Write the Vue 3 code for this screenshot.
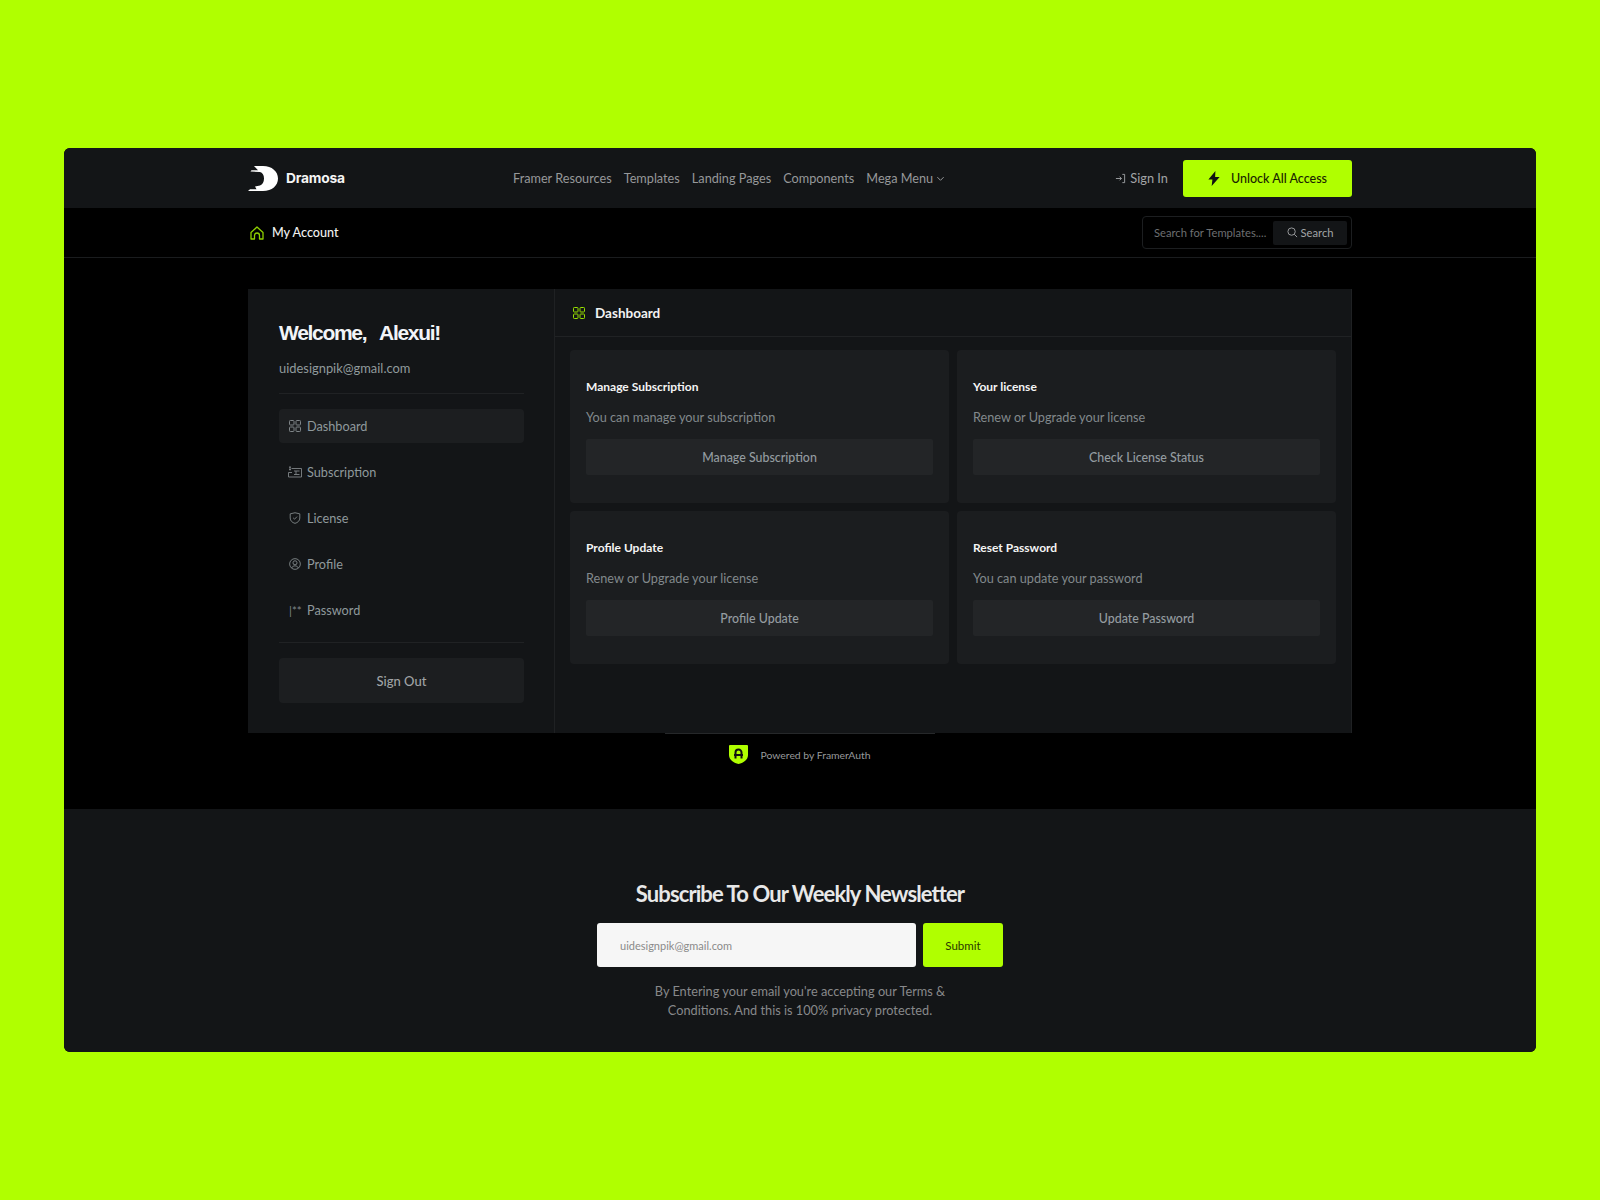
<script setup>
const navLinks = ['Framer Resources', 'Templates', 'Landing Pages', 'Components']

const menuItems = [
  { label: 'Dashboard', icon: 'grid', active: true },
  { label: 'Subscription', icon: 'card' },
  { label: 'License', icon: 'shield' },
  { label: 'Profile', icon: 'user' },
  { label: 'Password', icon: 'pass' }
]

const cards = [
  { title: 'Manage Subscription', text: 'You can manage your subscription', action: 'Manage Subscription' },
  { title: 'Your license', text: 'Renew or Upgrade your license', action: 'Check License Status' },
  { title: 'Profile Update', text: 'Renew or Upgrade your license', action: 'Profile Update' },
  { title: 'Reset Password', text: 'You can update your password', action: 'Update Password' }
]
</script>

<template>
  <div class="window">
    <!-- Top nav -->
    <header class="topbar">
      <div class="container topbar-inner">
        <div class="brand">
          <svg class="logo" viewBox="0 0 30 25" width="30" height="25">
            <path fill="#fff" d="M6 0H15C24 0 30 5.500 30 12.500S24 25 15 25H0L2 23.200H8.500L7 20.500 12 19.500C14.500 18.500 16 16 16 12.500S14.500 6.500 12 6L2.500 5.500 3.500 4.300H10Z" />
          </svg>
          <span>Dramosa</span>
        </div>
        <nav class="nav">
          <a v-for="link in navLinks" :key="link">{{ link }}</a>
          <a class="mega">Mega Menu
            <svg viewBox="0 0 10 10" width="9" height="9" fill="none" stroke="currentColor" stroke-width="1.100"><path d="M1.500 3.500 5 7l3.500-3.500" /></svg>
          </a>
        </nav>
        <div class="top-actions">
          <a class="signin">
            <svg viewBox="0 0 12 12" width="11" height="11" fill="none" stroke="currentColor" stroke-width="1"><path d="M1 6h6M5 4l2 2-2 2M8 1.500h2.500v9H8" /></svg>
            Sign In
          </a>
          <button class="unlock">
            <svg viewBox="0 0 12 16" width="12" height="15"><path fill="#111" d="M7.500 0 0 9h4.300L3.500 16 12 6.500H7.200Z" /></svg>
            Unlock All Access
          </button>
        </div>
      </div>
    </header>

    <!-- Breadcrumb and search -->
    <div class="subbar">
      <div class="container subbar-inner">
        <div class="crumb">
          <svg viewBox="0 0 14 14" width="14" height="14" fill="none" stroke="#8fd000" stroke-width="1.300" stroke-linejoin="round"><path d="M1 6.500 7 1l6 5.500V13H9.500V9.500a2.500 2.500 0 0 0-5 0V13H1Z" /></svg>
          <span>My Account</span>
        </div>
        <div class="searchbox">
          <span class="placeholder">Search for Templates....</span>
          <span class="searchbtn">
            <svg viewBox="0 0 12 12" width="11" height="11" fill="none" stroke="currentColor" stroke-width="1"><circle cx="5" cy="5" r="4" /><path d="m8 8 3 3" /></svg>
            Search
          </span>
        </div>
      </div>
    </div>

    <main class="content">
      <div class="container">
        <div class="panel">
          <aside class="sidebar">
            <h2 class="welcome">Welcome,&nbsp;&nbsp; Alexui!</h2>
            <p class="email">uidesignpik@gmail.com</p>
            <ul class="menu">
              <li v-for="item in menuItems" :key="item.label" :class="{ active: item.active }">
                <svg v-if="item.icon === 'grid'" class="micon" viewBox="0 0 12 12" fill="none" stroke="currentColor" stroke-width="1">
                  <rect x=".5" y=".5" width="4.500" height="4.500" rx=".8" /><rect x="7" y=".5" width="4.500" height="4.500" rx=".8" />
                  <rect x=".5" y="7" width="4.500" height="4.500" rx=".8" /><rect x="7" y="7" width="4.500" height="4.500" rx=".8" />
                </svg>
                <svg v-else-if="item.icon === 'card'" class="micon wide" viewBox="0 0 14 12" fill="none" stroke="currentColor" stroke-width=".9">
                  <path d="M3.500 2.500H13.500V11H.5V6.500H4M6 5h5.500M6 8.500h5.500M8 5v3.500M1 1.200h2M1 3.500h2M2 .5v4" />
                </svg>
                <svg v-else-if="item.icon === 'shield'" class="micon" viewBox="0 0 12 13" fill="none" stroke="currentColor" stroke-width="1">
                  <path d="M.8 2 6 .8 11.200 2v4.500C11.200 9.500 9 11.500 6 12.300 3 11.500.8 9.500.8 6.500Z" /><path d="m4 6.300 1.500 1.500 2.700-2.800" />
                </svg>
                <svg v-else-if="item.icon === 'user'" class="micon" viewBox="0 0 13 13" fill="none" stroke="currentColor" stroke-width="1">
                  <circle cx="6.500" cy="6.500" r="5.800" /><circle cx="6.500" cy="5.200" r="2.200" /><path d="M2.800 10.800c.8-1.500 2.100-2.300 3.700-2.300s2.900.8 3.700 2.300" />
                </svg>
                <span v-else class="micon-pass">|**</span>
                <span>{{ item.label }}</span>
              </li>
            </ul>
            <button class="signout">Sign Out</button>
          </aside>

          <section class="main">
            <div class="main-head">
              <svg viewBox="0 0 12 12" width="12" height="12" fill="none" stroke="#98e000" stroke-width="1">
                <rect x=".5" y=".5" width="4.500" height="4.500" rx=".8" /><rect x="7" y=".5" width="4.500" height="4.500" rx=".8" />
                <rect x=".5" y="7" width="4.500" height="4.500" rx=".8" /><rect x="7" y="7" width="4.500" height="4.500" rx=".8" />
              </svg>
              <span>Dashboard</span>
            </div>
            <div class="cards">
              <div v-for="card in cards" :key="card.title" class="card">
                <h3>{{ card.title }}</h3>
                <p>{{ card.text }}</p>
                <button>{{ card.action }}</button>
              </div>
            </div>
          </section>
        </div>

        <div class="powered">
          <svg viewBox="0 0 19 19" width="19" height="19">
            <path fill="#b0ff00" d="M1 0H18a1 1 0 0 1 1 1V10C19 15 14 18 9.500 19 5 18 0 15 0 10V1a1 1 0 0 1 1-1Z" />
            <path fill="none" stroke="#111" stroke-width="2" d="M6.500 13.500V7.500a3 3 0 0 1 6 0v6M5 10h9" />
          </svg>
          <span>Powered by FramerAuth</span>
        </div>
      </div>
    </main>

    <!-- Newsletter -->
    <footer class="newsletter">
      <h2>Subscribe To Our Weekly Newsletter</h2>
      <form class="subscribe" @submit.prevent>
        <div class="email-field">uidesignpik@gmail.com</div>
        <button>Submit</button>
      </form>
      <p>By Entering your email you're accepting our Terms &amp;<br />Conditions. And this is 100% privacy protected.</p>
    </footer>
  </div>
</template>

<style>
html, body {
  margin: 0;
  background: #b0ff00;
}
</style>

<style scoped>
.window {
  width: 1472px;
  margin: 148px auto 148px;
  background: #000;
  border-radius: 6px;
  overflow: hidden;
  font-family: Lato, "Noto Sans", sans-serif;
  color: #9a9c9e;
}

.container {
  width: 1104px;
  margin: 0 auto;
}

/* Top nav */
.topbar {
  height: 60px;
  background: #131517;
}

.topbar-inner {
  height: 100%;
  display: flex;
  align-items: center;
}

.brand {
  width: 265px;
  display: flex;
  align-items: center;
  gap: 8px;
  font-family: Inter, sans-serif;
  font-weight: 700;
  font-size: 13.800px;
  letter-spacing: -0.2px;
  color: #f4f4f4;
}

.nav {
  display: flex;
  gap: 12px;
  font-size: 12.700px;
  color: #96989a;
}

.mega {
  display: flex;
  align-items: center;
  gap: 3px;
}

.top-actions {
  margin-left: auto;
  display: flex;
  align-items: center;
  gap: 15px;
}

.signin {
  display: flex;
  align-items: center;
  gap: 4px;
  font-size: 12.800px;
  color: #a2a4a6;
}

.unlock {
  width: 169px;
  height: 37px;
  display: flex;
  align-items: center;
  justify-content: center;
  gap: 11px;
  border: 0;
  border-radius: 3px;
  background: #b0ff00;
  color: #1a2400;
  font: 500 12.500px Lato, sans-serif;
}

/* Sub bar */
.subbar {
  height: 49px;
  border-bottom: 1px solid #1a1c1e;
}

.subbar-inner {
  height: 100%;
  display: flex;
  align-items: center;
  justify-content: space-between;
}

.crumb {
  display: flex;
  align-items: center;
  gap: 8px;
  padding-left: 2px;
  font-size: 12.600px;
  font-weight: 500;
  color: #f0f0f0;
}

.searchbox {
  width: 210px;
  height: 33px;
  box-sizing: border-box;
  display: flex;
  align-items: center;
  justify-content: space-between;
  padding: 0 4px 0 11px;
  border: 1px solid #1c1e20;
  border-radius: 4px;
}

.placeholder {
  font-size: 11.200px;
  color: #6d6f71;
}

.searchbtn {
  width: 74px;
  height: 24px;
  display: flex;
  align-items: center;
  justify-content: center;
  gap: 3px;
  border-radius: 2px;
  background: #131517;
  font-size: 11.200px;
  color: #a2a4a6;
}

/* Panel */
.content {
  padding-top: 31px;
  height: 551px;
  box-sizing: border-box;
}

.panel {
  height: 444px;
  display: flex;
  background: #131517;
}

.sidebar {
  width: 307px;
  box-sizing: border-box;
  padding: 0 30px 0 31px;
  border-right: 1px solid #1f2123;
}

.welcome {
  margin: 29px 0 0;
  font: 700 21px/30px "Liberation Sans", sans-serif;
  letter-spacing: -1.300px;
  color: #f2f4f8;
}

.email {
  margin: 11px 0 0;
  padding-bottom: 16px;
  font-size: 12.900px;
  line-height: 18px;
  color: #909a9c;
  border-bottom: 1px solid #202224;
}

.menu {
  list-style: none;
  margin: 15px 0 0;
  padding: 0 0 15px;
  display: flex;
  flex-direction: column;
  gap: 12px;
  border-bottom: 1px solid #202224;
}

.menu li {
  height: 34px;
  display: flex;
  align-items: center;
  gap: 6px;
  padding-left: 10px;
  border-radius: 4px;
  font-size: 12.700px;
  color: #8f999c;
}

.menu li.active {
  background: #1c1e20;
}

.micon {
  width: 12px;
  height: 12px;
  color: #7f8588;
}

.micon.wide {
  width: 14px;
  margin-left: -1px;
  margin-right: -1px;
}

.micon-pass {
  width: 12px;
  font-size: 11.500px;
  white-space: nowrap;
  color: #7f8588;
}

.signout {
  width: 100%;
  height: 45px;
  margin-top: 15px;
  border: 0;
  border-radius: 4px;
  background: #1c1e20;
  color: #a0a4a6;
  font: 500 13px Lato, sans-serif;
}

/* Dashboard */
.main {
  flex: 1;
  border-right: 1px solid #1f2123;
}

.main-head {
  height: 48px;
  box-sizing: border-box;
  display: flex;
  align-items: center;
  gap: 10px;
  padding-left: 18px;
  border-bottom: 1px solid #202224;
  font-size: 13.500px;
  font-weight: 700;
  color: #f2f2f2;
}

.cards {
  display: grid;
  grid-template-columns: 379px 379px;
  gap: 8px;
  padding: 13px 15px 0;
}

.card {
  height: 153px;
  box-sizing: border-box;
  padding: 29px 16px 0;
  border-radius: 4px;
  background: #1b1d1f;
}

.card h3 {
  margin: 0;
  font: 700 12px/16px Lato, sans-serif;
  color: #f4f4f4;
}

.card p {
  margin: 14px 0 0;
  font-size: 12.700px;
  line-height: 16px;
  color: #82898c;
}

.card button {
  width: 100%;
  height: 36px;
  margin-top: 14px;
  border: 0;
  border-radius: 2px;
  background: #232527;
  color: #949ca0;
  font: 500 12.400px Lato, sans-serif;
}

.powered {
  position: relative;
  display: flex;
  align-items: center;
  justify-content: center;
  gap: 12px;
  padding-top: 12px;
  font-size: 10.400px;
  color: #97999b;
}

.powered::before {
  content: '';
  position: absolute;
  top: 0;
  left: 417px;
  width: 270px;
  height: 1px;
  background: #26282a;
}

/* Newsletter */
.newsletter {
  height: 243px;
  background: #131517;
  display: flex;
  flex-direction: column;
  align-items: center;
  text-align: center;
}

.newsletter h2 {
  margin: 70px 0 0;
  font: 700 22px/30px Lato, sans-serif;
  letter-spacing: -0.900px;
  color: #e8e8e8;
}

.subscribe {
  display: flex;
  gap: 7px;
  margin-top: 14px;
}

.email-field {
  width: 319px;
  height: 44px;
  box-sizing: border-box;
  padding: 0 23px;
  display: flex;
  align-items: center;
  border-radius: 3px;
  background: #f6f6f6;
  font-size: 11px;
  color: #8a8a8a;
}

.subscribe button {
  width: 80px;
  height: 44px;
  border: 0;
  border-radius: 3px;
  background: #b0ff00;
  color: #2a3800;
  font: 400 11.500px Lato, sans-serif;
}

.newsletter p {
  margin: 15px 0 0;
  font-size: 12.750px;
  line-height: 18.500px;
  color: #88898b;
}
</style>
